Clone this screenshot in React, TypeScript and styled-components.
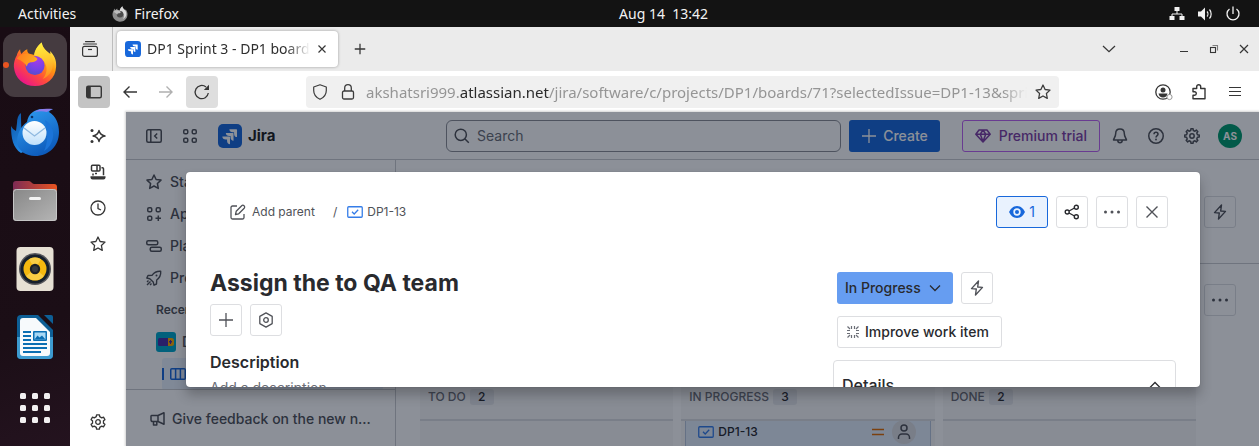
import React from "react";
import styled, { createGlobalStyle, css } from "styled-components";

const uiFont = '"Noto Sans", "Open Sans", sans-serif';
const jiraFont = 'Inter, "Noto Sans", sans-serif';

const GlobalStyle = createGlobalStyle`
  *, *::before, *::after { box-sizing: border-box; }
  body { margin: 0; background: #1b0e16; }
  button, input { font: inherit; color: inherit; }
  a { color: inherit; text-decoration: none; }
`;

/* ---------- icons ---------- */

const Svg = styled.svg`
  display: block;
  flex: none;
  fill: none;
  stroke: currentColor;
  overflow: visible;
`;

type IconProps = { size?: number; stroke?: number; children: React.ReactNode };

function Icon({ size = 16, stroke = 1.5, children }: IconProps) {
  return (
    <Svg width={size} height={size} viewBox="0 0 16 16" strokeWidth={stroke} aria-hidden="true">
      {children}
    </Svg>
  );
}

function gearPath(teeth: number, outer: number, inner: number) {
  const points: string[] = [];
  const step = (Math.PI * 2) / teeth;
  for (let i = 0; i < teeth; i++) {
    const a = i * step - Math.PI / 2;
    const corners: [number, number][] = [
      [-0.3, inner],
      [-0.19, outer],
      [0.19, outer],
      [0.3, inner],
    ];
    corners.forEach(([f, r]) => {
      points.push(`${(8 + Math.cos(a + f * step) * r).toFixed(2)} ${(8 + Math.sin(a + f * step) * r).toFixed(2)}`);
    });
  }
  return `M${points.join("L")}Z`;
}

const Gear = ({ teeth, stroke, hole }: { teeth: number; stroke: number; hole: number }) => (
  <Icon stroke={stroke}>
    <path d={gearPath(teeth, 7.3, 5.6)} strokeLinejoin="round" />
    <circle cx="8" cy="8" r={hole} />
  </Icon>
);

const StarIcon = ({ stroke = 1.3 }: { stroke?: number }) => (
  <Icon stroke={stroke}>
    <path
      strokeLinejoin="round"
      d="M8 1l2.1 4.5 4.9.6-3.6 3.4.9 4.9L8 12l-4.3 2.4.9-4.9L1 6.1l4.900-.6z"
    />
  </Icon>
);

const BoltIcon = () => (
  <Icon stroke={1.4}>
    <path strokeLinejoin="round" d="M9.500 1L2.500 8.600l4.800.4L6.500 15l7-7.600-4.800-.4z" />
  </Icon>
);

const DotsIcon = () => (
  <Icon>
    <g fill="currentColor" stroke="none">
      <circle cx="1.500" cy="8" r="1.500" />
      <circle cx="8" cy="8" r="1.500" />
      <circle cx="14.500" cy="8" r="1.500" />
    </g>
  </Icon>
);

const TaskIcon = () => (
  <Icon stroke={1.3}>
    <rect x="0.750" y="2.750" width="14.500" height="10.500" rx="1" />
    <path d="M5 7.800l2.200 2.200 4-4.200" />
  </Icon>
);

const PlusIcon = ({ size = 16, stroke = 1.5 }: { size?: number; stroke?: number }) => (
  <Icon size={size} stroke={stroke}>
    <path d="M8 1v14M1 8h14" />
  </Icon>
);

const JiraMark = ({ size }: { size: number }) => (
  <Svg width={size} height={size} viewBox="0 0 24 24" role="img" aria-label="Jira logo">
    <rect width="24" height="24" rx="5" fill="#1868db" stroke="none" />
    <path
      fill="#fff"
      stroke="none"
      d="M9.051 15.434H7.734c-1.988 0-3.413-1.218-3.413-3h7.085c.367 0 .605.26.605.63v7.130c-1.772 0-2.960-1.435-2.960-3.434zm3.500-3.543h-1.318c-1.987 0-3.413-1.196-3.413-2.978h7.085c.367 0 .627.239.627.608v7.130c-1.772 0-2.981-1.435-2.981-3.434zm3.520-3.522h-1.317c-1.987 0-3.413-1.217-3.413-3h7.085c.367 0 .605.262.605.610v7.129c-1.771 0-2.960-1.435-2.960-3.434z"
    />
  </Svg>
);

const bodyPath =
  "M5 14C5.500 11.500 7 9 8.500 7.500c0 2 .5 3.500 1.500 5 1.500-2.200 3.500-4 6-5-.3 1.500.2 3 1.500 4.500l6 1.500C24 8.500 27 3.500 31 .5c.5 4 2.500 6.500 5 9l4 3c0-1.200-.2-2-.5-3 4.500 4 7 9.500 6.500 16C45.500 38 36 46 24 46S3 37.500 2 26c-.3-4.500 1-8.500 3-12z";
const flamePath =
  "M23 14C23.500 8.500 27 3.500 31 .5c.5 4 2.500 6.500 5.500 9.500 4.500 4 6.500 9 6 15-.5 6-4.500 11-10.500 13.500 3.500-4 5-9 3.500-14C33.500 18.500 29 15.500 23 14z";
const headPath =
  "M5 17.500c2.500-4 7-5.800 12-5 3.500.8 7 2.300 9.500 5-.2 2.600-3.500 3.300-7 3.700-2.300.4-3.500 1.800-4 4.300-1.500-3-5-6-10.500-8z";

const FirefoxLogo = () => (
  <Svg width={48} height={48} viewBox="-1 -1 50 50" role="img" aria-label="Firefox">
    <defs>
      <linearGradient id="ffBody" x1="0.850" y1="0.100" x2="0.200" y2="0.950">
        <stop offset="0" stopColor="#fff44f" />
        <stop offset="0.350" stopColor="#ff980e" />
        <stop offset="0.650" stopColor="#ff4a3d" />
        <stop offset="1" stopColor="#e8128f" />
      </linearGradient>
      <linearGradient id="ffFlame" x1="0.500" y1="0" x2="0.600" y2="1">
        <stop offset="0" stopColor="#fff03f" />
        <stop offset="0.500" stopColor="#ffc52e" />
        <stop offset="1" stopColor="#ff8a1f" />
      </linearGradient>
      <radialGradient id="ffGlobe" cx="0.600" cy="0.200" r="0.850">
        <stop offset="0" stopColor="#a53bea" />
        <stop offset="0.600" stopColor="#7542e5" />
        <stop offset="1" stopColor="#5250c8" />
      </radialGradient>
      <linearGradient id="ffHead" x1="0" y1="0" x2="1" y2="0.300">
        <stop offset="0" stopColor="#ff7a1f" />
        <stop offset="1" stopColor="#ffab1f" />
      </linearGradient>
    </defs>
    <g stroke="none">
      <path fill="url(#ffBody)" d={bodyPath} />
      <path fill="url(#ffFlame)" d={flamePath} />
      <circle cx="24" cy="24.500" r="10" fill="url(#ffGlobe)" />
      <path fill="url(#ffHead)" d={headPath} />
    </g>
  </Svg>
);

const FirefoxMono = () => (
  <Svg width={16} height={16} viewBox="1 0 46 47" aria-hidden="true">
    <g stroke="none">
      <path fill="#8e8e8e" d={bodyPath} />
      <path fill="#dcdcdc" d={flamePath} />
      <circle cx="24" cy="24.500" r="9.500" fill="#4c4c4c" />
      <path fill="#bdbdbd" d={headPath} />
    </g>
  </Svg>
);

const ThunderbirdLogo = () => (
  <Svg width={50} height={50} viewBox="0 0 50 50" role="img" aria-label="Thunderbird">
    <defs>
      <linearGradient id="tbBody" x1="0.200" y1="0" x2="0.700" y2="1">
        <stop offset="0" stopColor="#2f9bf0" />
        <stop offset="1" stopColor="#0b57b8" />
      </linearGradient>
      <linearGradient id="tbWing" x1="0" y1="0" x2="0.600" y2="1">
        <stop offset="0" stopColor="#0a4f9e" />
        <stop offset="1" stopColor="#2491f0" />
      </linearGradient>
      <linearGradient id="tbMail" x1="0" y1="0" x2="0" y2="1">
        <stop offset="0" stopColor="#ffffff" />
        <stop offset="1" stopColor="#bfe0fb" />
      </linearGradient>
    </defs>
    <g stroke="none">
      <path fill="url(#tbWing)" d="M1 18c0 12 2 22 10 27l14-6-13-14c-1-6-1-12-1-20-3 2-4 6-4 10l-1 8c-2-1-4-3-5-5z" />
      <path fill="url(#tbBody)" d="M17 14c1-8 8-13 15-13h11c-2 1-4 2-4 3 7 4 10 12 10 20 0 14-10 24-24 24-9 0-16-5-18-12 0-10 3-17 10-22z" />
      <path fill="#8c7bea" d="M24 4c4-3 10-4 19-3-3 1-5 2-6 3-4-1-8-1-13 0z" />
      <circle cx="22" cy="9" r="1.300" fill="#0b2f66" />
      <path fill="#1b74d8" d="M35 12c6 4 9 10 8 17-1 6-4 11-9 14 4-8 4-18 1-31z" />
      <circle cx="24.500" cy="25" r="12" fill="url(#tbMail)" />
    </g>
    <path stroke="#8fb9e0" strokeWidth="1.300" d="M14 20l10.500 8 10.500-8" />
  </Svg>
);

const FilesLogo = () => (
  <Svg width={48} height={48} viewBox="0 0 48 48" role="img" aria-label="Files">
    <defs>
      <linearGradient id="flBack" x1="0" y1="0" x2="1" y2="0">
        <stop offset="0" stopColor="#7d2b55" />
        <stop offset="1" stopColor="#e95420" />
      </linearGradient>
      <linearGradient id="flFront" x1="0" y1="0" x2="1" y2="1">
        <stop offset="0" stopColor="#878787" />
        <stop offset="1" stopColor="#b5b5b5" />
      </linearGradient>
    </defs>
    <g stroke="none">
      <path fill="url(#flBack)" d="M2 7a3 3 0 0 1 3-3h13c2 0 3 3 5 3h20a3 3 0 0 1 3 3v10H2z" />
      <rect x="2" y="12" width="44" height="32" rx="3" fill="url(#flFront)" />
      <rect x="18" y="20" width="12" height="3" rx="1.500" fill="#f4f4f4" />
    </g>
    <rect x="2.500" y="12.500" width="43" height="31" rx="3" stroke="#c6c6c6" strokeWidth="1" />
  </Svg>
);

const RhythmboxLogo = () => (
  <Svg width={48} height={48} viewBox="0 0 48 48" role="img" aria-label="Rhythmbox">
    <g stroke="none">
      <rect x="5.500" y="2" width="37" height="44" rx="4" fill="#e6e0d4" />
      <circle cx="24" cy="24" r="16" fill="#55555a" />
      <circle cx="24" cy="24" r="14.500" fill="#16202c" />
      <circle cx="24" cy="24" r="11.500" fill="#f4b80f" />
      <path fill="#fbd65b" d="M24 24L15 31a11.500 11.500 0 0 0 18 0zM24 24l-6-9.800a11.500 11.500 0 0 1 12 0z" opacity="0.700" />
      <circle cx="24" cy="24" r="5.200" fill="#1d2126" />
      <circle cx="24" cy="24" r="3" fill="#34393e" />
    </g>
  </Svg>
);

const WriterLogo = () => (
  <Svg width={48} height={48} viewBox="0 0 48 48" role="img" aria-label="LibreOffice Writer">
    <g stroke="none">
      <path fill="#0d5f96" d="M10 2h17l15 15v25a4 4 0 0 1-4 4H10a4 4 0 0 1-4-4V6a4 4 0 0 1 4-4z" />
      <path fill="#3d9bd0" d="M6 24h36v18a4 4 0 0 1-4 4H10a4 4 0 0 1-4-4z" />
      <path fill="#0d5f96" d="M33 2h7a2 2 0 0 1 2 2v7z" />
      <path fill="#f7fafc" d="M12 5h13l14 14v21a3 3 0 0 1-3 3H12a3 3 0 0 1-3-3V8a3 3 0 0 1 3-3z" />
      <rect x="22" y="18" width="14" height="10" rx="1" fill="#0b6fb3" />
      <rect x="23.500" y="19.500" width="11" height="7" fill="#a8d8f5" />
      <path fill="#0b6fb3" d="M23.500 26.500l3-4 2 2 2.500-2 3.500 4z" />
    </g>
    <path stroke="#0b6fb3" strokeWidth="1.800" d="M12 19h8M12 23h8M12 27h8M12 31h24M12 35h24M12 39h18" />
  </Svg>
);

const AppsGrid = () => (
  <Svg width={30} height={30} viewBox="0 0 30 30" aria-hidden="true">
    <g fill="#f2f0f1" stroke="none">
      {[0, 12, 24].map((y) => [0, 12, 24].map((x) => <rect key={`${x}-${y}`} x={x} y={y} width="6" height="6" rx="1.500" />))}
    </g>
  </Svg>
);

/* ---------- desktop shell ---------- */

const Desktop = styled.div`
  display: flex;
  flex-direction: column;
  height: 100vh;
  overflow: hidden;
  font-family: ${uiFont};
`;

const SystemBar = styled.header`
  display: grid;
  grid-template-columns: 53fr auto 47fr;
  align-items: center;
  flex: none;
  height: 27px;
  padding: 0 18px;
  background: #131313;
  color: #f2f2f2;
  font-size: 14px;
  font-weight: 400;
  line-height: 20px;
`;

const SystemGroup = styled.div<{ $end?: boolean; $gap: number }>`
  display: flex;
  align-items: center;
  justify-content: ${(p) => (p.$end ? "flex-end" : "flex-start")};
  gap: ${(p) => p.$gap}px;
`;

const SystemItem = styled.button`
  display: flex;
  align-items: center;
  gap: 6px;
  padding: 0;
  border: 0;
  background: none;
  white-space: pre;
`;

const Workspace = styled.div`
  display: flex;
  flex: 1;
  min-height: 0;
`;

const Dock = styled.nav`
  display: flex;
  flex-direction: column;
  align-items: center;
  gap: 4px;
  flex: none;
  width: 70px;
  padding: 6px 0;
  background: linear-gradient(160deg, #190c14 0%, #1b0e16 70%, #24131f 100%);
`;

const DockItem = styled.button<{ $active?: boolean; $last?: boolean }>`
  position: relative;
  display: grid;
  place-items: center;
  flex: none;
  width: 64px;
  height: 64px;
  margin-top: ${(p) => (p.$last ? "auto" : "0")};
  padding: 0;
  border: 0;
  border-radius: 12px;
  background: ${(p) => (p.$active ? "#453b40" : "none")};
`;

const RunningDot = styled.span`
  position: absolute;
  left: 0;
  width: 6px;
  height: 6px;
  border-radius: 50%;
  background: #e95420;
`;

/* ---------- browser ---------- */

const Browser = styled.div`
  display: flex;
  flex-direction: column;
  flex: 1;
  min-width: 0;
  background: #fff;
  color: #2f2f2f;
`;

const TabStrip = styled.div`
  display: flex;
  align-items: center;
  flex: none;
  height: 44px;
  padding-right: 1px;
  background: #ebebeb;
`;

const ViewSlot = styled.div`
  display: flex;
  align-items: center;
  align-self: stretch;
  width: 43px;
  padding-left: 4px;
  border-right: 1px solid #bdbdbd;
`;

const ToolButton = styled.button<{ $tone?: "pressed" | "hover"; $faint?: boolean }>`
  display: grid;
  place-items: center;
  flex: none;
  width: 32px;
  height: 32px;
  padding: 0;
  border: 0;
  border-radius: 4px;
  background: ${(p) => (p.$tone === "pressed" ? "#c4c4c4" : p.$tone === "hover" ? "#dedede" : "none")};
  color: ${(p) => (p.$faint ? "#b0b0b0" : "#363636")};
`;

const Tab = styled.div`
  display: flex;
  align-items: center;
  width: 221px;
  height: 36px;
  margin: 0 6px 0 4px;
  padding-left: 8px;
  border-radius: 4px;
  background: #fff;
  box-shadow: 0 0 3px rgba(0, 0, 0, 0.35);
`;

const fadeRight = css`
  overflow: hidden;
  white-space: nowrap;
  mask-image: linear-gradient(to left, transparent, #000 24px);
`;

const TabTitle = styled.span`
  flex: 1;
  min-width: 0;
  margin-left: 6px;
  font-size: 14px;
  line-height: 20px;
  ${fadeRight}
`;

const TabClose = styled(ToolButton)`
  width: 24px;
  height: 24px;
  margin-right: 4px;
`;

const WindowControls = styled.div`
  display: flex;
  gap: 2px;
  margin-left: 45px;

  button {
    width: 28px;
  }
`;

const Spacer = styled.div`
  flex: 1;
`;

const NavBar = styled.div`
  display: flex;
  align-items: center;
  gap: 4px;
  flex: none;
  height: 41px;
  padding: 0 8px;
`;

const UrlBar = styled.div`
  display: flex;
  align-items: center;
  flex: 1;
  min-width: 0;
  height: 32px;
  margin: 0 84px;
  border-radius: 4px;
  background: #f0f0f0;
  color: #3c3c3c;
`;

const UrlIcon = styled.span`
  display: grid;
  place-items: center;
  width: 28px;
  flex: none;

  &:last-child {
    width: 32px;
  }
`;

const UrlText = styled.div`
  flex: 1;
  min-width: 0;
  margin-left: 4px;
  color: #959595;
  font-size: 15px;
  line-height: 20px;
  ${fadeRight}

  strong {
    color: #2b2b2b;
    font-weight: 400;
  }
`;

const BrowserBody = styled.div`
  display: flex;
  flex: 1;
  min-height: 0;
`;

const BrowserSidebar = styled.aside`
  display: flex;
  flex-direction: column;
  align-items: center;
  gap: 4px;
  flex: none;
  width: 56px;
  padding: 8px 0;
`;

/* ---------- Jira page ---------- */

const Page = styled.div`
  position: relative;
  display: flex;
  flex-direction: column;
  flex: 1;
  min-width: 0;
  overflow: hidden;
  background: #fff;
  color: #292a2e;
  font-family: ${jiraFont};
  font-size: 14px;
  line-height: 20px;
  box-shadow: 0 0 2px 1px rgba(0, 0, 0, 0.18);
`;

const TopNav = styled.header`
  display: flex;
  align-items: center;
  flex: none;
  height: 48px;
  padding: 0 17px 0 12px;
  border-bottom: 1px solid #c9cbd0;
  color: #505258;
`;

const TopLeft = styled.div`
  display: flex;
  align-items: center;
  gap: 4px;
  flex: none;
  width: 308px;
`;

const NavIconButton = styled.button`
  display: grid;
  place-items: center;
  width: 32px;
  height: 32px;
  padding: 0;
  border: 0;
  background: none;
`;

const Brand = styled.a`
  display: flex;
  align-items: center;
  gap: 6px;
  margin-left: 8px;
  color: #1e1f21;
  font-size: 15px;
  font-weight: 700;
`;

const SearchBox = styled.label`
  display: flex;
  align-items: center;
  gap: 7px;
  flex: 1;
  height: 32px;
  padding: 0 7px;
  border: 1px solid #8c8f97;
  border-radius: 6px;

  input {
    flex: 1;
    min-width: 0;
    padding: 0;
    border: 0;
    outline: 0;
    background: none;
    font-size: 14px;
  }
  input::placeholder {
    color: #6b6e76;
    opacity: 1;
  }
`;

const CreateButton = styled.button`
  display: flex;
  align-items: center;
  gap: 6px;
  height: 32px;
  margin: 0 22px 0 8px;
  padding: 0 12px;
  border: 0;
  border-radius: 3px;
  background: #1868db;
  color: #fff;
  font-weight: 500;
`;

const TrialButton = styled.button`
  display: flex;
  align-items: center;
  gap: 8px;
  height: 32px;
  margin-right: 4px;
  padding: 0 12px;
  border: 1px solid #bf63f3;
  border-radius: 3px;
  background: none;
  color: #803fa5;
  font-weight: 500;
`;

const TopRight = styled.div`
  display: flex;
  align-items: center;
  gap: 4px;
`;

const UserBadge = styled.span`
  display: grid;
  place-items: center;
  width: 24px;
  height: 24px;
  margin-left: 10px;
  border-radius: 50%;
  background: #009c6d;
  color: #fff;
  font-size: 10px;
  font-weight: 700;
`;

const PageBody = styled.div`
  display: flex;
  flex: 1;
  min-height: 0;
`;

const SideNav = styled.nav`
  display: flex;
  flex-direction: column;
  flex: none;
  width: 270px;
  border-right: 1px solid #c9cbd0;
  color: #505258;
  font-weight: 500;
`;

const SideList = styled.div`
  flex: 1;
  min-height: 0;
  padding: 6px 12px 0;
`;

const SideLink = styled.a<{ $indent?: number; $selected?: boolean }>`
  display: flex;
  align-items: center;
  gap: 8px;
  height: 32px;
  margin-left: ${(p) => p.$indent ?? 0}px;
  padding-left: 8px;
  border-radius: 3px;
  background: ${(p) => (p.$selected ? "#e9f2fe" : "none")};
  color: ${(p) => (p.$selected ? "#1868db" : "inherit")};
`;

const ProjectLink = styled(SideLink)`
  gap: 6px;
`;

const BoardLink = styled(SideLink)`
  gap: 6px;
`;

const SelectedMark = styled.span`
  width: 2px;
  height: 12px;
  margin-left: -8px;
  background: #1868db;
`;

const SideHeading = styled.div`
  height: 32px;
  padding-left: 18px;
  color: #505258;
  font-size: 12px;
  font-weight: 600;
  line-height: 32px;
`;

const SideFooter = styled.footer`
  display: flex;
  align-items: center;
  flex: none;
  height: 57px;
  padding: 2px 24px 0;
  border-top: 1px solid #c9cbd0;
`;

const FooterLink = styled.a`
  display: flex;
  align-items: center;
  gap: 6px;
  min-width: 0;

  span {
    overflow: hidden;
    white-space: nowrap;
    text-overflow: ellipsis;
  }
`;

const Main = styled.main`
  display: flex;
  flex-direction: column;
  flex: 1;
  min-width: 0;
`;

const MainBar = styled.div<{ $line?: boolean }>`
  display: flex;
  justify-content: flex-end;
  align-items: flex-end;
  flex: none;
  height: ${(p) => (p.$line ? 104 : 52)}px;
  padding: 0 23px ${(p) => (p.$line ? 35 : 0)}px;
  border-bottom: ${(p) => (p.$line ? "1px solid #c9cbd0" : "0")};
`;

const Columns = styled.div`
  display: grid;
  grid-template-columns: repeat(3, minmax(0, 1fr));
  gap: 8px;
  flex: 1;
  min-height: 0;
  padding: 56px 63px 0 24px;
`;

const Column = styled.section`
  min-width: 0;
  overflow: hidden;
  background: #f7f7f8;
`;

const ColumnHead = styled.h2`
  display: flex;
  align-items: center;
  gap: 4px;
  height: 49px;
  margin: 0;
  padding: 2px 8px 0;
  border-bottom: 2px solid #dddee1;
  color: #6b6e76;
  font-size: 12px;
  font-weight: 500;
  line-height: 16px;
`;

const Count = styled.span`
  min-width: 24px;
  padding: 0 8px;
  border-radius: 3px;
  background: #e6e7ea;
  color: #292a2e;
  text-align: center;
`;

const Card = styled.article`
  display: flex;
  align-items: center;
  height: 80px;
  margin: 0 4px;
  padding: 0 14px 58px 12px;
  border: 1px solid #b7c6dc;
  border-top: 0;
  background: #e3eefc;
  font-size: 12px;
  font-weight: 500;
`;

const Assignee = styled.span`
  display: grid;
  place-items: center;
  width: 24px;
  height: 24px;
  margin-left: 6px;
  border-radius: 50%;
  background: #dddee1;
  color: #505258;
`;

const CardKey = styled.span`
  flex: 1;
  margin-left: 4px;
`;

const Tint = styled.span<{ $color: string }>`
  color: ${(p) => p.$color};
`;

const Blanket = styled.div`
  position: absolute;
  inset: 0;
  background: rgba(5, 12, 31, 0.46);
`;

/* ---------- dialog ---------- */

const Dialog = styled.div`
  position: absolute;
  inset: 60px 59px 59px 60px;
  display: flex;
  flex-direction: column;
  overflow: hidden;
  border-radius: 4px;
  background: #fff;
  box-shadow: 0 8px 12px rgba(30, 31, 33, 0.3), 0 0 1px rgba(30, 31, 33, 0.4);
`;

const DialogHead = styled.div`
  display: flex;
  align-items: center;
  justify-content: space-between;
  flex: none;
  height: 80px;
  padding: 0 32px 0 44px;
`;

const Crumbs = styled.nav`
  display: flex;
  align-items: center;
  color: #505258;
  font-size: 12px;
  line-height: 16px;
`;

const Crumb = styled.a<{ $gap: number }>`
  display: flex;
  align-items: center;
  gap: ${(p) => p.$gap}px;
`;

const Slash = styled.span`
  margin: 0 10px 0 18px;
`;

const ButtonRow = styled.div`
  display: flex;
  gap: 8px;
`;

const BoxButton = styled.button<{ $tone?: "watch" | "status" | "text" }>`
  display: flex;
  align-items: center;
  justify-content: center;
  gap: 4px;
  flex: none;
  min-width: 32px;
  height: 32px;
  padding: 0;
  border: 1px solid #dddee1;
  border-radius: 3px;
  background: none;
  color: #505258;
  font-size: 14px;
  font-weight: 500;
  line-height: 20px;

  ${(p) =>
    p.$tone === "text" &&
    css`
      padding: 0 12px 0 7px;
      color: #292a2e;
    `}
  ${(p) =>
    p.$tone === "watch" &&
    css`
      min-width: 52px;
      border-color: #1868db;
      background: #e9f2fe;
      color: #1868db;
      font-weight: 400;
    `}
  ${(p) =>
    p.$tone === "status" &&
    css`
      gap: 6px;
      padding: 0 10px 0 8px;
      border: 0;
      background: #669df1;
      color: #292a2e;
    `}
`;

const DialogBody = styled.div`
  display: flex;
  flex: 1;
  min-height: 0;
  padding: 0 24px;
`;

const Primary = styled.div`
  flex: 1;
  min-width: 0;
  padding-top: 16px;
`;

const Secondary = styled.div`
  display: flex;
  flex-direction: column;
  gap: 12px;
  flex: none;
  width: 343px;
  padding-top: 20px;

  > div {
    padding-left: 4px;
  }
`;

const Title = styled.h1`
  margin: 0 0 6px;
  font-size: 23px;
  font-weight: 700;
  line-height: 30px;
`;

const SectionTitle = styled.h2`
  margin: 16px 0 6px;
  font-size: 16px;
  font-weight: 600;
  line-height: 20px;
`;

const Placeholder = styled.p`
  margin: 0;
  color: #6b6e76;
`;

const Details = styled.section`
  display: flex;
  align-items: center;
  justify-content: space-between;
  flex: none;
  height: 50px;
  padding: 0 12px 0 8px;
  border: 1px solid #dddee1;
  border-radius: 4px;

  h2 {
    margin: 0;
    font-size: 16px;
    font-weight: 500;
    line-height: 20px;
  }
`;

export default function App() {
  return (
    <Desktop>
      <GlobalStyle />
      <SystemBar>
        <SystemGroup $gap={36}>
          <SystemItem>Activities</SystemItem>
          <SystemItem>
            <FirefoxMono />
            Firefox
          </SystemItem>
        </SystemGroup>
        <SystemItem>{"Aug 14  13:42"}</SystemItem>
        <SystemGroup $end $gap={12}>
          <Icon stroke={1}>
            <path d="M8 4v4M3 11V8h10v3" />
            <path fill="currentColor" stroke="none" d="M5.500 1h5v4h-5zM.5 10h5v4h-5zM10.500 10h5v4h-5z" />
          </Icon>
          <Icon stroke={1.2}>
            <path fill="currentColor" stroke="none" d="M1 5.500h3L8 1.500v13l-4-4H1z" />
            <path d="M10 5.500c1.200 1.300 1.200 3.700 0 5M12.500 3.500c2.200 2.500 2.200 6.500 0 9" />
          </Icon>
          <Icon stroke={1.3}>
            <path d="M8 .5v7.500M4.500 3a6 6 0 1 0 7 0" />
          </Icon>
        </SystemGroup>
      </SystemBar>

      <Workspace>
        <Dock aria-label="Dock">
          <DockItem $active>
            <RunningDot />
            <FirefoxLogo />
          </DockItem>
          <DockItem>
            <ThunderbirdLogo />
          </DockItem>
          <DockItem>
            <FilesLogo />
          </DockItem>
          <DockItem>
            <RhythmboxLogo />
          </DockItem>
          <DockItem>
            <WriterLogo />
          </DockItem>
          <DockItem $last aria-label="Show applications">
            <AppsGrid />
          </DockItem>
        </Dock>

        <Browser>
          <TabStrip>
            <ViewSlot>
              <ToolButton aria-label="Firefox View">
                <Icon stroke={1.2}>
                  <path d="M3.500.6h9M1.500 3h13" strokeLinecap="round" />
                  <rect x="0.600" y="5.400" width="14.800" height="10" rx="2" />
                  <path d="M6 8.500h4" />
                </Icon>
              </ToolButton>
            </ViewSlot>
            <Tab>
              <JiraMark size={16} />
              <TabTitle>DP1 Sprint 3 - DP1 board</TabTitle>
              <TabClose aria-label="Close tab">
                <Icon size={8} stroke={2.4}>
                  <path d="M1 1l14 14M15 1L1 15" />
                </Icon>
              </TabClose>
            </Tab>
            <ToolButton aria-label="New tab">
              <PlusIcon size={12} stroke={1.7} />
            </ToolButton>
            <Spacer />
            <ToolButton aria-label="List all tabs">
              <Icon size={12} stroke={1.7}>
                <path d="M0 4l8 7.500L16 4" />
              </Icon>
            </ToolButton>
            <WindowControls>
              <ToolButton aria-label="Minimize">
                <Icon size={8} stroke={2}>
                  <path d="M0 13h16" />
                </Icon>
              </ToolButton>
              <ToolButton aria-label="Restore">
                <Icon size={8} stroke={2.2}>
                  <rect x="1" y="5" width="10" height="10" />
                  <path d="M5 1h10v10" opacity="0.600" />
                </Icon>
              </ToolButton>
              <ToolButton aria-label="Close window">
                <Icon size={8} stroke={2.4}>
                  <path d="M0 0l16 16M16 0L0 16" />
                </Icon>
              </ToolButton>
            </WindowControls>
          </TabStrip>

          <NavBar>
            <ToolButton $tone="pressed" aria-label="Sidebars">
              <Icon stroke={1.4}>
                <rect x="0.700" y="2.200" width="14.600" height="11.600" rx="1.500" />
                <path fill="currentColor" stroke="none" d="M1 2.500h3.800v11H1z" />
              </Icon>
            </ToolButton>
            <ToolButton aria-label="Back">
              <Icon stroke={1.4}>
                <path d="M15 8H2M7.500 2.500L2 8l5.500 5.500" />
              </Icon>
            </ToolButton>
            <ToolButton $faint aria-label="Forward">
              <Icon stroke={1.4}>
                <path d="M1 8h13M8.500 2.500L14 8l-5.500 5.500" />
              </Icon>
            </ToolButton>
            <ToolButton $tone="hover" aria-label="Reload">
              <Icon stroke={1.3}>
                <path d="M14.300 9A6.600 6.600 0 1 1 12 3" />
                <path fill="currentColor" stroke="none" d="M15 .8V6H9.800z" />
              </Icon>
            </ToolButton>
            <UrlBar>
              <UrlIcon>
                <Icon stroke={1.2}>
                  <path d="M8 .8L14.300 3v3.500c0 4-2.300 7-6.300 8.800C4 13.500 1.700 10.500 1.700 6.500V3z" strokeLinejoin="round" />
                </Icon>
              </UrlIcon>
              <UrlIcon>
                <Icon stroke={1.3}>
                  <rect x="2.500" y="7" width="11" height="8" rx="1.500" />
                  <path d="M4.700 7V3.900a3.300 3.300 0 0 1 6.600 0V7" />
                </Icon>
              </UrlIcon>
              <UrlText>
                akshatsri999.<strong>atlassian.net</strong>
                /jira/software/c/projects/DP1/boards/71?selectedIssue=DP1-13&amp;sprints=104
              </UrlText>
              <UrlIcon>
                <StarIcon />
              </UrlIcon>
            </UrlBar>
            <ToolButton aria-label="Account">
              <Icon stroke={1.3}>
                <circle cx="8" cy="8" r="7.200" />
                <circle cx="8" cy="6" r="2.500" fill="currentColor" stroke="none" />
                <path fill="currentColor" stroke="none" d="M3.500 9.500h9c-.5 2.500-2 4-4.500 4s-4-1.500-4.500-4z" />
                <circle cx="14.500" cy="13" r="2.600" fill="#fff" stroke="#999" strokeWidth="1" />
              </Icon>
            </ToolButton>
            <ToolButton aria-label="Extensions">
              <Icon stroke={1.4}>
                <path
                  strokeLinejoin="round"
                  d="M2 4.500h3.700V2.700a2 2 0 0 1 4 0v1.800H14v10.300H2v-3.600h1.600a1.700 1.700 0 0 0 0-3.400H2z"
                />
              </Icon>
            </ToolButton>
            <ToolButton aria-label="Menu">
              <Icon stroke={1.2}>
                <path d="M2 3.500h12M2 7.500h12M2 11.500h12" />
              </Icon>
            </ToolButton>
          </NavBar>

          <BrowserBody>
            <BrowserSidebar>
              <ToolButton aria-label="AI chatbot">
                <Icon stroke={1.4}>
                  <path strokeLinejoin="round" d="M9 2.500c.7 3.300 2.200 4.800 6 5.500-3.800.7-5.300 2.200-6 5.500-.7-3.300-2.200-4.800-6-5.500 3.800-.7 5.300-2.200 6-5.500z" />
                  <g fill="currentColor" stroke="none">
                    <circle cx="2" cy="2.500" r="1.500" />
                    <circle cx="2" cy="13.500" r="1.500" />
                  </g>
                </Icon>
              </ToolButton>
              <ToolButton aria-label="Synced tabs">
                <Icon stroke={1.5}>
                  <rect x="1.500" y="1.200" width="8.500" height="5.800" rx="1" />
                  <path d="M7 1v6M11.500 3.800h1a1 1 0 0 1 1 1v6.500M3 9.500v2M5 9.500h2" />
                  <path fill="currentColor" stroke="none" d="M.5 12.200h15v1.300a2 2 0 0 1-2 2h-11a2 2 0 0 1-2-2z" />
                </Icon>
              </ToolButton>
              <ToolButton aria-label="History">
                <Icon stroke={1.3}>
                  <circle cx="8" cy="8" r="7" />
                  <path d="M8 3.500v5l3 1.500" />
                </Icon>
              </ToolButton>
              <ToolButton aria-label="Bookmarks">
                <StarIcon />
              </ToolButton>
              <Spacer />
              <ToolButton aria-label="Customize sidebar">
                <Gear teeth={6} stroke={1.3} hole={2.3} />
              </ToolButton>
            </BrowserSidebar>

            <Page>
              <TopNav>
                <TopLeft>
                  <NavIconButton aria-label="Collapse sidebar">
                    <Icon>
                      <rect x="0.750" y="1.750" width="14.500" height="12.500" rx="1.500" />
                      <path d="M4.800 2v12M11.200 5.500L8.700 8l2.500 2.500" />
                    </Icon>
                  </NavIconButton>
                  <NavIconButton aria-label="Switch sites or apps">
                    <Icon>
                      <rect x="1.750" y="1.750" width="4" height="4" rx="1.300" />
                      <rect x="10.250" y="1.750" width="4" height="4" rx="1.300" />
                      <rect x="1.750" y="10.250" width="4" height="4" rx="1.300" />
                      <rect x="10.250" y="10.250" width="4" height="4" rx="1.300" />
                    </Icon>
                  </NavIconButton>
                  <Brand href="#">
                    <JiraMark size={24} />
                    Jira
                  </Brand>
                </TopLeft>
                <SearchBox>
                  <Icon>
                    <circle cx="6.800" cy="6.800" r="5.600" />
                    <path d="M10.800 10.800l4 4" />
                  </Icon>
                  <input type="search" placeholder="Search" aria-label="Search" />
                </SearchBox>
                <CreateButton>
                  <PlusIcon size={16} stroke={1.3} />
                  Create
                </CreateButton>
                <TrialButton>
                  <Icon stroke={1.5}>
                    <path strokeLinejoin="round" d="M4 2h8l3.200 4.200L8 14 .8 6.200zM1 6.200h14M5.300 6.200L8 13.500l2.700-7.300L8 2 5.300 6.200z" />
                  </Icon>
                  Premium trial
                </TrialButton>
                <TopRight>
                  <NavIconButton aria-label="Notifications">
                    <Icon>
                      <path strokeLinejoin="round" d="M8 1C5 1 3.700 3.200 3.700 5.500 3.700 8.500 2 10 1.500 12h13c-.5-2-2.200-3.500-2.200-6.500C12.300 3.200 11 1 8 1zM5.800 12.500a2.200 2.200 0 0 0 4.400 0" />
                    </Icon>
                  </NavIconButton>
                  <NavIconButton aria-label="Help">
                    <Icon>
                      <circle cx="8" cy="8" r="7.250" />
                      <path d="M6 6.300C6 5 6.900 4.300 8 4.300s2 .8 2 1.900C10 7.600 8 7.700 8 9.500" />
                      <circle cx="8" cy="11.500" r="0.900" fill="currentColor" stroke="none" />
                    </Icon>
                  </NavIconButton>
                  <NavIconButton aria-label="Settings">
                    <Gear teeth={8} stroke={1.5} hole={2.2} />
                  </NavIconButton>
                </TopRight>
                <UserBadge>AS</UserBadge>
              </TopNav>

              <PageBody>
                <SideNav>
                  <SideList>
                    <SideLink href="#">
                      <StarIcon stroke={1.5} />
                      Starred
                    </SideLink>
                    <SideLink href="#">
                      <Icon>
                        <rect x="1.750" y="1.750" width="4" height="4" rx="1.300" />
                        <rect x="10.250" y="1.750" width="4" height="4" rx="1.300" />
                        <rect x="1.750" y="10.250" width="4" height="4" rx="1.300" />
                        <path d="M12.300 9.500v5.500M9.500 12.300H15" />
                      </Icon>
                      Apps
                    </SideLink>
                    <SideLink href="#">
                      <Icon>
                        <rect x="0.750" y="2.750" width="11" height="4" rx="1.500" />
                        <rect x="4.250" y="9.250" width="11" height="4" rx="1.500" />
                      </Icon>
                      Plans
                    </SideLink>
                    <SideLink href="#">
                      <Icon stroke={1.4}>
                        <path
                          strokeLinejoin="round"
                          d="M14.700 1.300c-4-.3-6.500 1-8.700 4L2 5.500.8 8l3 .8L7.200 12l.8 3.200 2.500-1.200.2-4c3-2.200 4.300-4.700 4-8.700zM1 15l3.500-3.500M1 12l1.500-1.500M4 15l1.500-1.500"
                        />
                        <circle cx="10.500" cy="5.500" r="1" fill="currentColor" stroke="none" />
                      </Icon>
                      Projects
                    </SideLink>
                    <SideHeading>Recent</SideHeading>
                    <ProjectLink href="#" $indent={10}>
                      <Svg width={20} height={20} viewBox="0 0 20 20" aria-hidden="true">
                        <g stroke="none">
                          <rect width="20" height="20" rx="3" fill="#00a8cc" />
                          <rect x="2" y="6" width="11" height="8" rx="1.500" fill="#4b2fa8" />
                          <path fill="#ffab00" d="M12 6h3.500a2.500 2.500 0 0 1 2.500 2.500v3a2.500 2.500 0 0 1-2.500 2.500H12z" />
                          <path fill="#4b2fa8" d="M13 9h1V8h1v1h1v1.500h-1V12h-1v-1.500h-1z" />
                        </g>
                      </Svg>
                      DP1
                    </ProjectLink>
                    <BoardLink href="#" $indent={24} $selected aria-label="DP1 board">
                      <SelectedMark />
                      <Icon>
                        <rect x="0.750" y="2.750" width="14.500" height="10.500" rx="1" />
                        <path d="M5.600 3v10M10.400 3v10" />
                      </Icon>
                    </BoardLink>
                  </SideList>
                  <SideFooter>
                    <FooterLink href="#">
                      <Icon>
                        <path strokeLinejoin="round" d="M1.500 4.500H8l6-2.800v11.600L8 10.500H2.800A1.800 1.800 0 0 1 1 8.700V5zM8 4.500v6M3.500 10.500v3.500h3.300v-3.500" />
                      </Icon>
                      <span>Give feedback on the new navigation</span>
                    </FooterLink>
                  </SideFooter>
                </SideNav>

                <Main>
                  <MainBar $line>
                    <BoxButton aria-label="Automation">
                      <BoltIcon />
                    </BoxButton>
                  </MainBar>
                  <MainBar>
                    <BoxButton aria-label="More board actions">
                      <DotsIcon />
                    </BoxButton>
                  </MainBar>
                  <Columns>
                    <Column>
                      <ColumnHead>
                        TO DO <Count>2</Count>
                      </ColumnHead>
                    </Column>
                    <Column>
                      <ColumnHead>
                        IN PROGRESS <Count>3</Count>
                      </ColumnHead>
                      <Card>
                        <Tint $color="#357de8">
                          <TaskIcon />
                        </Tint>
                        <CardKey>DP1-13</CardKey>
                        <Tint $color="#e06c00">
                          <Icon>
                            <path d="M2 5.500h12M2 10.500h12" />
                          </Icon>
                        </Tint>
                        <Assignee>
                          <Icon>
                            <circle cx="8" cy="4" r="3" />
                            <path d="M2.500 15v-1.500a3.500 3.500 0 0 1 3.500-3.500h4a3.500 3.500 0 0 1 3.500 3.500V15" />
                          </Icon>
                        </Assignee>
                      </Card>
                    </Column>
                    <Column>
                      <ColumnHead>
                        DONE <Count>2</Count>
                      </ColumnHead>
                    </Column>
                  </Columns>
                </Main>
              </PageBody>

              <Blanket />

              <Dialog role="dialog" aria-label="Assign the to QA team">
                <DialogHead>
                  <Crumbs>
                    <Crumb href="#" $gap={6}>
                      <Icon stroke={1.3}>
                        <path d="M7 2H2.500A1.500 1.500 0 0 0 1 3.500v10A1.500 1.500 0 0 0 2.500 15h10a1.500 1.500 0 0 0 1.500-1.500V10" />
                        <path strokeLinejoin="round" d="M5.500 10.500l.7-3.200 5.500-5.600c1.500-1.500 4 .8 2.500 2.500L8.700 9.800z" />
                      </Icon>
                      Add parent
                    </Crumb>
                    <Slash>/</Slash>
                    <Crumb href="#" $gap={4}>
                      <Tint $color="#357de8">
                        <TaskIcon />
                      </Tint>
                      DP1-13
                    </Crumb>
                  </Crumbs>
                  <ButtonRow>
                    <BoxButton $tone="watch" aria-label="Watchers: 1">
                      <Icon stroke={0}>
                        <path fill="currentColor" d="M8 2C4 2 1.500 5 0 8c1.500 3 4 6 8 6s6.500-3 8-6c-1.500-3-4-6-8-6z" />
                        <circle cx="8" cy="8" r="3.700" fill="#e9f2fe" />
                        <circle cx="8" cy="8" r="2" fill="currentColor" />
                      </Icon>
                      1
                    </BoxButton>
                    <BoxButton aria-label="Share">
                      <Tint $color="#292a2e">
                        <Icon stroke={1.4}>
                          <circle cx="3.200" cy="8" r="2" />
                          <circle cx="12.300" cy="3.200" r="2" />
                          <circle cx="12.300" cy="12.800" r="2" />
                          <path d="M5 7l5.500-3M5 9l5.500 3" />
                        </Icon>
                      </Tint>
                    </BoxButton>
                    <BoxButton aria-label="Actions">
                      <DotsIcon />
                    </BoxButton>
                    <BoxButton aria-label="Close">
                      <Icon stroke={1.4}>
                        <path d="M2.500 2.500l11 11M13.500 2.500l-11 11" />
                      </Icon>
                    </BoxButton>
                  </ButtonRow>
                </DialogHead>
                <DialogBody>
                  <Primary>
                    <Title>Assign the to QA team</Title>
                    <ButtonRow>
                      <BoxButton aria-label="Add">
                        <PlusIcon stroke={1.3} />
                      </BoxButton>
                      <BoxButton aria-label="Configure">
                        <Icon stroke={1.3}>
                          <path strokeLinejoin="round" d="M8 .9l6.200 3.500v7.200L8 15.100l-6.200-3.500V4.400z" />
                          <circle cx="8" cy="8" r="2.300" />
                        </Icon>
                      </BoxButton>
                    </ButtonRow>
                    <SectionTitle>Description</SectionTitle>
                    <Placeholder>Add a description...</Placeholder>
                  </Primary>
                  <Secondary>
                    <ButtonRow>
                      <BoxButton $tone="status">
                        In Progress
                        <Icon stroke={1.3}>
                          <path d="M3 5.500l5 5 5-5" />
                        </Icon>
                      </BoxButton>
                      <BoxButton aria-label="Run automation">
                        <BoltIcon />
                      </BoxButton>
                    </ButtonRow>
                    <ButtonRow>
                      <BoxButton $tone="text">
                        <Tint $color="#6b6e76">
                          <Icon stroke={1.2}>
                            <path d="M6.500 2v3M9.500 2v3M6.500 11v3M9.500 11v3M2 6.500h3M2 9.500h3M11 6.500h3M11 9.500h3M2.500 2.500l2.500 2.500M13.500 2.500L11 5M2.500 13.500L5 11M13.500 13.500L11 11" />
                          </Icon>
                        </Tint>
                        Improve work item
                      </BoxButton>
                    </ButtonRow>
                    <Details>
                      <h2>Details</h2>
                      <Icon stroke={1.3}>
                        <path d="M3 10.500l5-5 5 5" />
                      </Icon>
                    </Details>
                  </Secondary>
                </DialogBody>
              </Dialog>
            </Page>
          </BrowserBody>
        </Browser>
      </Workspace>
    </Desktop>
  );
}
